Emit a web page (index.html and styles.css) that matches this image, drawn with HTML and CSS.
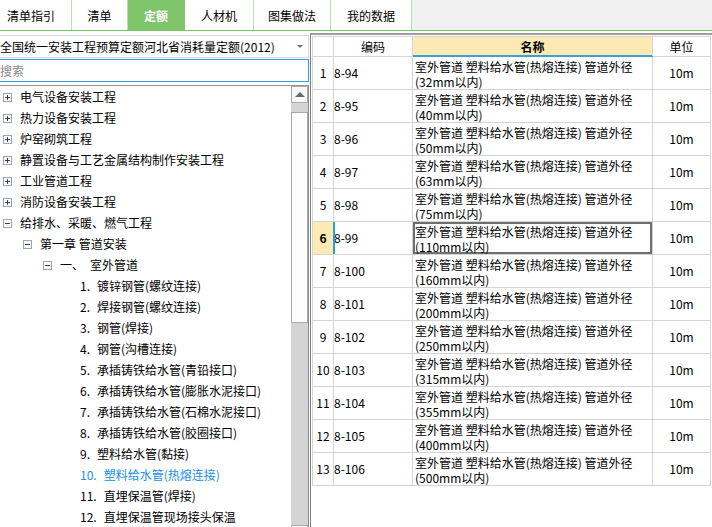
FILE: index.html
```html
<!DOCTYPE html>
<html lang="zh-CN">
<head>
<meta charset="utf-8">
<title>定额</title>
<link rel="stylesheet" href="styles.css">
</head>
<body>
<div class="tabs">
  <div class="tab t1">清单指引</div>
  <div class="tab t2">清单</div>
  <div class="tab t3 active">定额</div>
  <div class="tab t4">人材机</div>
  <div class="tab t5">图集做法</div>
  <div class="tab t6">我的数据</div>
</div>
<div class="main">
  <div class="left">
    <div class="dropdown"><span class="dd-text">全国统一安装工程预算定额河北省消耗量定额(2012)</span><span class="dd-arrow"></span></div>
    <div class="search">搜索</div>
    <div class="tree">
      <div class="tree-list">
        <div class="node l0"><svg class="exp" width="9" height="9" viewBox="0 0 9 9"><rect x="0.5" y="0.5" width="8" height="8" fill="#fff" stroke="#9aa5b5"/><path d="M2 4.5h5M4.5 2v5" stroke="#26407a"/></svg><span>电气设备安装工程</span></div>
        <div class="node l0"><svg class="exp" width="9" height="9" viewBox="0 0 9 9"><rect x="0.5" y="0.5" width="8" height="8" fill="#fff" stroke="#9aa5b5"/><path d="M2 4.5h5M4.5 2v5" stroke="#26407a"/></svg><span>热力设备安装工程</span></div>
        <div class="node l0"><svg class="exp" width="9" height="9" viewBox="0 0 9 9"><rect x="0.5" y="0.5" width="8" height="8" fill="#fff" stroke="#9aa5b5"/><path d="M2 4.5h5M4.5 2v5" stroke="#26407a"/></svg><span>炉窑砌筑工程</span></div>
        <div class="node l0"><svg class="exp" width="9" height="9" viewBox="0 0 9 9"><rect x="0.5" y="0.5" width="8" height="8" fill="#fff" stroke="#9aa5b5"/><path d="M2 4.5h5M4.5 2v5" stroke="#26407a"/></svg><span>静置设备与工艺金属结构制作安装工程</span></div>
        <div class="node l0"><svg class="exp" width="9" height="9" viewBox="0 0 9 9"><rect x="0.5" y="0.5" width="8" height="8" fill="#fff" stroke="#9aa5b5"/><path d="M2 4.5h5M4.5 2v5" stroke="#26407a"/></svg><span>工业管道工程</span></div>
        <div class="node l0"><svg class="exp" width="9" height="9" viewBox="0 0 9 9"><rect x="0.5" y="0.5" width="8" height="8" fill="#fff" stroke="#9aa5b5"/><path d="M2 4.5h5M4.5 2v5" stroke="#26407a"/></svg><span>消防设备安装工程</span></div>
        <div class="node l0"><svg class="exp" width="9" height="9" viewBox="0 0 9 9"><rect x="0.5" y="0.5" width="8" height="8" fill="#fff" stroke="#9aa5b5"/><path d="M2 4.5h5" stroke="#26407a"/></svg><span>给排水、采暖、燃气工程</span></div>
        <div class="node l1"><svg class="exp" width="9" height="9" viewBox="0 0 9 9"><rect x="0.5" y="0.5" width="8" height="8" fill="#fff" stroke="#9aa5b5"/><path d="M2 4.5h5" stroke="#26407a"/></svg><span>第一章 管道安装</span></div>
        <div class="node l2"><svg class="exp" width="9" height="9" viewBox="0 0 9 9"><rect x="0.5" y="0.5" width="8" height="8" fill="#fff" stroke="#9aa5b5"/><path d="M2 4.5h5" stroke="#26407a"/></svg><span>一、</span><span class="sec">室外管道</span></div>
        <div class="node leaf"><span class="num">1.</span><span>镀锌钢管(螺纹连接)</span></div>
        <div class="node leaf"><span class="num">2.</span><span>焊接钢管(螺纹连接)</span></div>
        <div class="node leaf"><span class="num">3.</span><span>钢管(焊接)</span></div>
        <div class="node leaf"><span class="num">4.</span><span>钢管(沟槽连接)</span></div>
        <div class="node leaf"><span class="num">5.</span><span>承插铸铁给水管(青铅接口)</span></div>
        <div class="node leaf"><span class="num">6.</span><span>承插铸铁给水管(膨胀水泥接口)</span></div>
        <div class="node leaf"><span class="num">7.</span><span>承插铸铁给水管(石棉水泥接口)</span></div>
        <div class="node leaf"><span class="num">8.</span><span>承插铸铁给水管(胶圈接口)</span></div>
        <div class="node leaf"><span class="num">9.</span><span>塑料给水管(黏接)</span></div>
        <div class="node leaf current"><span class="num">10.</span><span>塑料给水管(热熔连接)</span></div>
        <div class="node leaf"><span class="num">11.</span><span>直埋保温管(焊接)</span></div>
        <div class="node leaf"><span class="num">12.</span><span>直埋保温管现场接头保温</span></div>
      </div>
      <div class="vscroll">
        <div class="sb-btn"><span class="sb-up"></span></div>
        <div class="sb-track"><div class="sb-thumb"></div></div>
        <div class="sb-btn"><span class="sb-down"></span></div>
      </div>
    </div>
  </div>
  <div class="right">
    <table class="grid">
      <colgroup><col class="c-no"><col class="c-code"><col class="c-name"><col class="c-unit"></colgroup>
      <thead>
        <tr><th></th><th>编码</th><th class="h-name">名称</th><th>单位</th></tr>
      </thead>
      <tbody>
        <tr><td class="no">1</td><td class="code">8-94</td><td class="name">室外管道 塑料给水管(热熔连接) 管道外径<br>(32mm以内)</td><td class="unit">10m</td></tr>
        <tr><td class="no">2</td><td class="code">8-95</td><td class="name">室外管道 塑料给水管(热熔连接) 管道外径<br>(40mm以内)</td><td class="unit">10m</td></tr>
        <tr><td class="no">3</td><td class="code">8-96</td><td class="name">室外管道 塑料给水管(热熔连接) 管道外径<br>(50mm以内)</td><td class="unit">10m</td></tr>
        <tr><td class="no">4</td><td class="code">8-97</td><td class="name">室外管道 塑料给水管(热熔连接) 管道外径<br>(63mm以内)</td><td class="unit">10m</td></tr>
        <tr><td class="no">5</td><td class="code">8-98</td><td class="name">室外管道 塑料给水管(热熔连接) 管道外径<br>(75mm以内)</td><td class="unit">10m</td></tr>
        <tr class="selected"><td class="no">6</td><td class="code">8-99</td><td class="name">室外管道 塑料给水管(热熔连接) 管道外径<br>(110mm以内)</td><td class="unit">10m</td></tr>
        <tr><td class="no">7</td><td class="code">8-100</td><td class="name">室外管道 塑料给水管(热熔连接) 管道外径<br>(160mm以内)</td><td class="unit">10m</td></tr>
        <tr><td class="no">8</td><td class="code">8-101</td><td class="name">室外管道 塑料给水管(热熔连接) 管道外径<br>(200mm以内)</td><td class="unit">10m</td></tr>
        <tr><td class="no">9</td><td class="code">8-102</td><td class="name">室外管道 塑料给水管(热熔连接) 管道外径<br>(250mm以内)</td><td class="unit">10m</td></tr>
        <tr><td class="no">10</td><td class="code">8-103</td><td class="name">室外管道 塑料给水管(热熔连接) 管道外径<br>(315mm以内)</td><td class="unit">10m</td></tr>
        <tr><td class="no">11</td><td class="code">8-104</td><td class="name">室外管道 塑料给水管(热熔连接) 管道外径<br>(355mm以内)</td><td class="unit">10m</td></tr>
        <tr><td class="no">12</td><td class="code">8-105</td><td class="name">室外管道 塑料给水管(热熔连接) 管道外径<br>(400mm以内)</td><td class="unit">10m</td></tr>
        <tr><td class="no">13</td><td class="code">8-106</td><td class="name">室外管道 塑料给水管(热熔连接) 管道外径<br>(500mm以内)</td><td class="unit">10m</td></tr>
      </tbody>
    </table>
  </div>
</div>
</body>
</html>
```

FILE: styles.css
```css
* { box-sizing: border-box; }
html, body { margin: 0; padding: 0; height: 527px; overflow: hidden; }
body {
  font-family: "Noto Sans CJK SC", "Noto Sans", sans-serif;
  font-size: 12px;
  color: #000;
  background: #fff;
}

/* tabs */
.tabs {
  display: flex;
  height: 31px;
  background: #f0f0f0;
  border-bottom: 1px solid #7cc46a;
}
.tab {
  display: flex;
  align-items: center;
  justify-content: center;
  padding-top: 2px;
  background: #fff;
  border-right: 1px solid #b7e1a6;
  font-size: 12px;
  line-height: 14px;
}
.t1 { width: 72px; padding-right: 9px; }
.t2 { width: 56px; }
.t3 { width: 57px; }
.t4 { width: 69px; }
.t5 { width: 77px; }
.t6 { width: 81px; }
.tab.active {
  background: #7ec56c;
  color: #fff;
  font-weight: bold;
  border-right-color: #7ec56c;
}

/* main */
.main { display: flex; }

.left {
  width: 309px;
  display: flex;
  flex-direction: column;
}
.dropdown {
  margin-top: 4px;
  height: 23px;
  border: 1px solid #d9d9d9;
  border-left: 0;
  display: flex;
  align-items: center;
  justify-content: space-between;
  padding-right: 5px;
  white-space: nowrap;
  line-height: 14px;
}
.dd-arrow {
  width: 0;
  height: 0;
  border-left: 3px solid transparent;
  border-right: 3px solid transparent;
  border-top: 3px solid #6f6f6f;
}
.search {
  margin-top: 1px;
  height: 23px;
  border: 1px solid #2aa2de;
  border-left: 0;
  color: #8a8a8a;
  display: flex;
  align-items: center;
  line-height: 14px;
}
.tree {
  margin-top: 3px;
  height: 457px;
  border-top: 1px solid #979797;
  border-right: 1px solid #8a8a8a;
  display: flex;
}
.tree-list {
  flex: 1;
  overflow: hidden;
}
.node {
  height: 21px;
  display: flex;
  align-items: center;
  white-space: nowrap;
  line-height: 14px;
  padding-top: 1px;
}
.exp { flex: none; margin-right: 8px; display: block; }
.l0 { padding-left: 3px; }
.l1 { padding-left: 23px; }
.l2 { padding-left: 43px; }
.sec { margin-left: 6px; }
.leaf { padding-left: 80px; }
.num { margin-right: 7px; }
.current { color: #1a8fe8; }

/* scrollbar */
.vscroll {
  width: 17px;
  flex: none;
  display: flex;
  flex-direction: column;
  background: #d4d4d4;
}
.sb-btn {
  height: 17px;
  flex: none;
  border: 1px solid #ababab;
  background: #f7f7f7;
  display: flex;
  align-items: center;
  justify-content: center;
}
.sb-up {
  width: 0; height: 0;
  border-left: 5px solid transparent;
  border-right: 5px solid transparent;
  border-bottom: 5px solid #606a78;
}
.sb-down {
  width: 0; height: 0;
  border-left: 5px solid transparent;
  border-right: 5px solid transparent;
  border-top: 5px solid #606a78;
}
.sb-track {
  flex: 1;
  padding-top: 9px;
}
.sb-thumb {
  height: 211px;
  background: #fcfcfc;
  border: 1px solid #a9a9a9;
}

/* right grid */
.right {
  flex: 1;
  margin-left: 1px;
  margin-top: 2px;
  border-left: 1px solid #7d7d7d;
  border-top: 2px solid #9e9e9e;
  padding: 1px 0 0 1px;
  background: #fff;
}
.grid {
  border-collapse: collapse;
  table-layout: fixed;
  width: 399px;
}
.c-no { width: 21px; }
.c-code { width: 79px; }
.c-name { width: 240px; }
.c-unit { width: 58px; }
.grid th, .grid td {
  border: 1px solid #d4d4d4;
  padding: 0;
  line-height: 14px;
  white-space: nowrap;
}
.grid th {
  height: 20px;
  font-weight: normal;
  text-align: center;
  padding-top: 1px;
  background: #fff;
}
.grid th.h-name {
  background: #fde9b4;
  font-weight: bold;
  border-bottom-color: #3aa0d8;
  box-shadow: inset 0 -1px 0 #3aa0d8;
}
.grid td { height: 33px; vertical-align: middle; }
.no { text-align: center; padding-top: 3px; }
.code { padding: 3px 0 0 2px; }
.grid td.name { padding: 1px 2px 0 2px; line-height: 15px; }
.unit { text-align: center; padding-top: 3px; }

.selected .no { background: #fde9b4; font-weight: bold; }
.selected .code { position: relative; }
.selected .code::before {
  content: "";
  position: absolute;
  left: -1px;
  top: 0;
  bottom: 0;
  width: 2px;
  background: #2a9fdc;
}
.selected .name { box-shadow: inset 0 0 0 2px #6f6f6f; }
```
